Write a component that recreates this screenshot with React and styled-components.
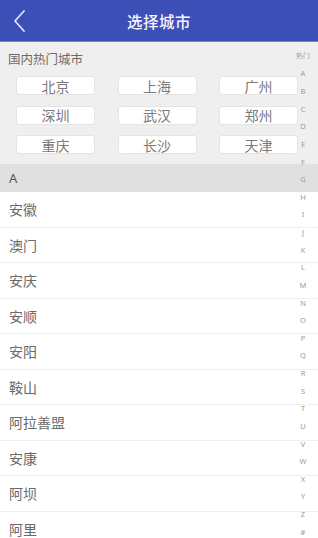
import React from "react";
import styled, { createGlobalStyle } from "styled-components";

const Global = createGlobalStyle`
  html, body { margin: 0; padding: 0; background: #fff; }
  body { font-family: "Noto Sans CJK SC", "Noto Sans", sans-serif; }
  * { box-sizing: border-box; }
`;

const Screen = styled.div`
  position: relative;
  width: 318px;
  height: 538px;
  overflow: hidden;
  background: #fff;
`;

const Header = styled.header`
  height: 42px;
  background: #3b4fb6;
  border-bottom: 1px solid #6f7fd0;
  display: flex;
  align-items: center;
  justify-content: center;
  position: relative;
`;

const BackButton = styled.button`
  position: absolute;
  left: 8px;
  top: 8px;
  width: 24px;
  height: 26px;
  border: 0;
  background: transparent;
  padding: 0;
  display: flex;
  align-items: center;
  justify-content: center;
`;

const Title = styled.h1`
  margin: 0;
  color: #f4f5ff;
  font-size: 15.5px;
  font-weight: 500;
  letter-spacing: 0.5px;
`;

const HotSection = styled.section`
  background: #efefef;
  padding: 8px 20px 10px 16px;
`;

const HotTitle = styled.div`
  font-size: 12.5px;
  line-height: 18px;
  color: #6a6a6a;
  margin-left: -8px;
  margin-bottom: 8px;
`;

const HotGrid = styled.div`
  display: grid;
  grid-template-columns: repeat(3, 79px);
  justify-content: space-between;
  row-gap: 10.5px;
`;

const CityButton = styled.div`
  height: 19px;
  background: #fff;
  border: 1px solid #e4e4e4;
  border-radius: 3px;
  display: flex;
  align-items: center;
  justify-content: center;
  font-size: 14px;
  color: #7a7a7a;
`;

const LetterHeader = styled.div`
  height: 28px;
  background: #e0e0e0;
  display: flex;
  align-items: center;
  padding-left: 9px;
  font-family: "Noto Sans", sans-serif;
  font-size: 13px;
  color: #555;
`;

const List = styled.ul`
  list-style: none;
  margin: 0;
  padding: 0;
`;

const Row = styled.li`
  height: 35.5px;
  display: flex;
  align-items: center;
  padding-left: 9px;
  font-size: 14px;
  color: #6a6a6a;
  border-bottom: 1px solid #f0f0f0;
`;

const IndexBar = styled.nav`
  position: absolute;
  right: 4px;
  top: 47px;
  width: 22px;
  display: flex;
  flex-direction: column;
`;

const IndexItem = styled.span`
  height: 17.63px;
  display: flex;
  align-items: center;
  justify-content: center;
  font-family: "Noto Sans", sans-serif;
  font-size: ${(p) => (p.$small ? 7 : 7.5)}px;
  color: #9a9a9a;
`;

const hot = ["北京", "上海", "广州", "深圳", "武汉", "郑州", "重庆", "长沙", "天津"];
const cities = ["安徽", "澳门", "安庆", "安顺", "安阳", "鞍山", "阿拉善盟", "安康", "阿坝", "阿里"];
const index = ["热门", ..."ABCDEFGHIJKLMNOPQRSTUVWXYZ".split(""), "#"];

export default function App() {
  return (
    <Screen>
      <Global />
      <Header>
        <BackButton aria-label="返回">
          <svg width="14" height="24" viewBox="0 0 14 24">
            <path d="M11 2 L2 12 L11 22" fill="none" stroke="#dfe4ff" strokeWidth="1.8" strokeLinecap="round" strokeLinejoin="round" />
          </svg>
        </BackButton>
        <Title>选择城市</Title>
      </Header>
      <HotSection>
        <HotTitle>国内热门城市</HotTitle>
        <HotGrid>
          {hot.map((c) => (
            <CityButton key={c}>{c}</CityButton>
          ))}
        </HotGrid>
      </HotSection>
      <LetterHeader>A</LetterHeader>
      <List>
        {cities.map((c) => (
          <Row key={c}>{c}</Row>
        ))}
      </List>
      <IndexBar>
        {index.map((l) => (
          <IndexItem key={l} $small={l === "热门"}>{l}</IndexItem>
        ))}
      </IndexBar>
    </Screen>
  );
}
